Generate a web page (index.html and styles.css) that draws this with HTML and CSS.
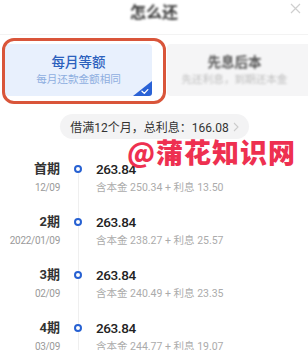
FILE: index.html
```html
<!DOCTYPE html>
<html lang="zh">
<head>
<meta charset="utf-8">
<title>怎么还</title>
<link rel="stylesheet" href="styles.css">
</head>
<body>
<div class="page">
  <header class="hdr">
    <span></span>
    <h1 class="title">怎么还</h1>
    <span class="close">
      <svg width="11" height="11" viewBox="0 0 11 11"><path d="M1 1L10 10M10 1L1 10" stroke="#cfcfcf" stroke-width="1.2" fill="none"/></svg>
    </span>
  </header>

  <div class="plans">
    <div class="plan plan-active">
      <div class="plan-name">每月等额</div>
      <div class="plan-desc">每月还款金额相同</div>
      <svg class="plan-check" width="19" height="15" viewBox="0 0 19 15">
        <path d="M19 0V12Q19 15 16 15H0Z" fill="#2a62d6"/>
        <path d="M9 10.2L11.3 12.4L14.8 8.6" stroke="#fff" stroke-width="1.3" fill="none" stroke-linecap="round" stroke-linejoin="round"/>
      </svg>
      <span class="annot"></span>
    </div>
    <div class="plan plan-other">
      <div class="plan-name blur">先息后本</div>
      <div class="plan-desc blur">先还利息，到期还本金</div>
    </div>
  </div>

  <div class="summary">
    <span class="pill">借满12个月，总利息：166.08
      <svg class="chev" width="6" height="10" viewBox="0 0 6 10"><path d="M1 1L5 5L1 9" stroke="#cccccc" stroke-width="1.1" fill="none"/></svg>
    </span>
  </div>

  <ul class="timeline">
    <li class="row">
      <div class="term"><div class="term-no">首期</div><div class="term-date">12/09</div></div>
      <div class="axis"><span class="dot"></span></div>
      <div class="detail"><div class="amt">263.84</div><div class="split">含本金 250.34 + 利息 13.50</div></div>
    </li>
    <li class="row">
      <div class="term"><div class="term-no">2期</div><div class="term-date">2022/01/09</div></div>
      <div class="axis"><span class="dot"></span></div>
      <div class="detail"><div class="amt">263.84</div><div class="split">含本金 238.27 + 利息 25.57</div></div>
    </li>
    <li class="row">
      <div class="term"><div class="term-no">3期</div><div class="term-date">02/09</div></div>
      <div class="axis"><span class="dot"></span></div>
      <div class="detail"><div class="amt">263.84</div><div class="split">含本金 240.49 + 利息 23.35</div></div>
    </li>
    <li class="row">
      <div class="term"><div class="term-no">4期</div><div class="term-date">03/09</div></div>
      <div class="axis"><span class="dot"></span></div>
      <div class="detail"><div class="amt">263.84</div><div class="split">含本金 244.77 + 利息 19.07</div></div>
    </li>
  </ul>

  <div class="watermark">@蒲花知识网</div>
</div>
</body>
</html>
```

FILE: styles.css
```css
* { box-sizing: border-box; }
html, body { margin: 0; padding: 0; background: #fff; }
body { font-family: Roboto, "Noto Sans CJK SC", sans-serif; color: #222; }

.page {
  position: relative;
  width: 308px;
  height: 350px;
  overflow: hidden;
  background: #fff;
}

.hdr {
  height: 35px;
  display: grid;
  grid-template-columns: 1fr auto 1fr;
  border-bottom: 1px solid #f3f3f3;
}
.title {
  margin: 0;
  font-size: 16px;
  line-height: 26px;
  font-weight: 700;
  color: #3a3a3a;
  filter: blur(0.8px);
}
.close {
  justify-self: end;
  align-self: start;
  margin-top: 3px;
  margin-right: 7px;
  display: flex;
  filter: blur(0.4px);
}

.plans {
  display: flex;
  gap: 15px;
  padding: 9px 0 0 5px;
}
.plan {
  height: 52px;
  border-radius: 4px;
  display: flex;
  flex-direction: column;
  align-items: center;
  justify-content: center;
}
.plan-active {
  position: relative;
  width: 147px;
  flex-shrink: 0;
  background: #e8f0fd;
}
.plan-other {
  flex: 1;
  background: #f5f5f6;
  padding-right: 6px;
  border-radius: 4px 0 0 4px;
}
.plan-name {
  font-size: 13.5px;
  line-height: 18px;
  font-weight: 500;
  color: #2c61bd;
}
.plan-desc {
  margin-top: 1px;
  font-size: 10.6px;
  line-height: 16px;
  color: #8eaee0;
}
.plan-other .plan-name { color: #555; font-weight: 700; }
.plan-other .plan-desc { color: #bdbdbd; }
.blur { filter: blur(0.9px); }

.plan-check {
  position: absolute;
  right: 0;
  bottom: 0;
}
.annot {
  position: absolute;
  left: -3px;
  top: -6px;
  right: -14px;
  bottom: -8px;
  border: 3px solid #d9553a;
  border-radius: 12px;
  pointer-events: none;
}

.summary {
  display: flex;
  justify-content: center;
  margin-top: 18px;
  padding-left: 1px;
}
.pill {
  height: 25px;
  display: inline-flex;
  align-items: center;
  gap: 4px;
  padding: 0 10px 0 10px;
  border-radius: 13px;
  background: #f3f3f4;
  font-size: 12px;
  color: #333;
}
.chev { display: block; }

.timeline {
  list-style: none;
  margin: 20px 0 0 0;
  padding: 0;
}
.row {
  display: grid;
  grid-template-columns: 60px 36px 1fr;
  padding-bottom: 15px;
}
.term { text-align: right; }
.term-no {
  font-size: 13px;
  line-height: 20px;
  font-weight: 700;
  color: #333;
}
.term-date {
  font-size: 10px;
  line-height: 18px;
  letter-spacing: -0.3px;
  color: #9a9a9a;
}
.axis { position: relative; }
.axis::after {
  content: "";
  position: absolute;
  left: 18px;
  top: 14px;
  bottom: -21px;
  width: 1px;
  background: #efefef;
}
.dot {
  position: absolute;
  left: 14px;
  top: 6px;
  width: 8px;
  height: 8px;
  border: 2px solid #2761d2;
  border-radius: 50%;
  background: #fff;
}
.amt {
  font-size: 13.5px;
  line-height: 20px;
  font-weight: 500;
  letter-spacing: -0.4px;
  color: #222;
}
.split {
  font-size: 10.5px;
  line-height: 18px;
  color: #ababab;
}

.watermark {
  position: absolute;
  left: 127px;
  top: 141px;
  font-family: "Noto Sans CJK SC", sans-serif;
  font-size: 27px;
  line-height: 21px;
  font-weight: 900;
  letter-spacing: 1px;
  color: #ee3050;
  white-space: nowrap;
}
```
